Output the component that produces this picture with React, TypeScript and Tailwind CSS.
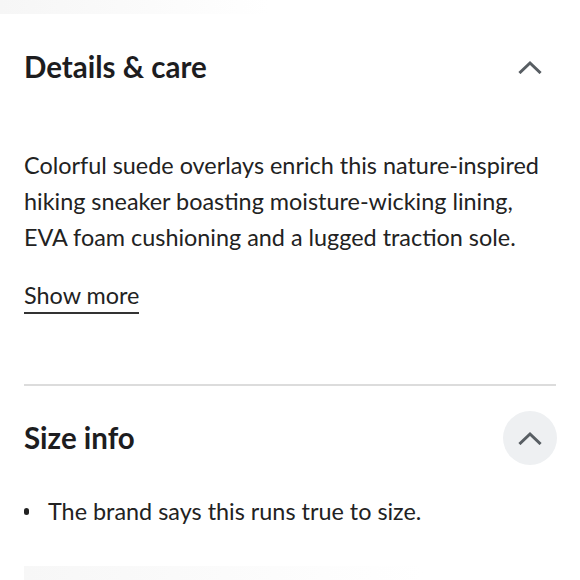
import { ReactNode } from "react";

function Chevron() {
  return (
    <svg width="24" height="14" viewBox="0 0 24 14" fill="none" aria-hidden>
      <path d="M2.5 12 L12 3 L21.5 12" stroke="#585e63" strokeWidth="3" strokeLinecap="square" />
    </svg>
  );
}

function SectionHeader({ title, filled, children }: { title: string; filled?: boolean; children?: ReactNode }) {
  return (
    <div className="flex items-center justify-between h-[54px]">
      <h2 className="text-[29.5px] font-bold text-[#1d1d1f]">{title}</h2>
      <button
        className={`w-[54px] h-[54px] -mr-[1px] rounded-full flex items-center justify-center ${filled ? "bg-[#eef0f2]" : ""}`}
      >
        <Chevron />
      </button>
      {children}
    </div>
  );
}

export default function App() {
  return (
    <div className="w-[580px] h-[580px] bg-white overflow-hidden font-['Lato','Noto_Sans',sans-serif] text-[#222]">
      {/* faded edge of the block above */}
      <div className="h-[14px] w-[270px] bg-gradient-to-r from-[#f6f6f6] to-white" />

      <div className="px-6">
        {/* Details & care */}
        <div className="mt-[26px]">
          <SectionHeader title="Details & care" />
        </div>
        <p className="mt-[53px] text-[23.4px] leading-[36px]">
          Colorful suede overlays enrich this nature-inspired hiking sneaker boasting moisture-wicking lining, EVA foam
          cushioning and a lugged traction sole.
        </p>
        <div className="mt-[25px] flex">
          <button className="text-[23.4px] leading-[30px] border-b-2 border-[#333] pb-[2px]">Show more</button>
        </div>

        <div className="mt-[70px] h-[2px] bg-[#dcdcdc]" />

        {/* Size info */}
        <div className="mt-[25px]">
          <SectionHeader title="Size info" filled />
        </div>
        <ul className="mt-[28px]">
          <li className="flex items-center gap-[19px] text-[23.4px] leading-[36px]">
            <span className="w-[5px] h-[7px] rounded-full bg-[#222]" />
            The brand says this runs true to size.
          </li>
        </ul>
      </div>

      <div className="mt-[37px] mx-6 h-[16px] w-[400px] bg-gradient-to-r from-[#f7f7f7] to-white" />
    </div>
  );
}
